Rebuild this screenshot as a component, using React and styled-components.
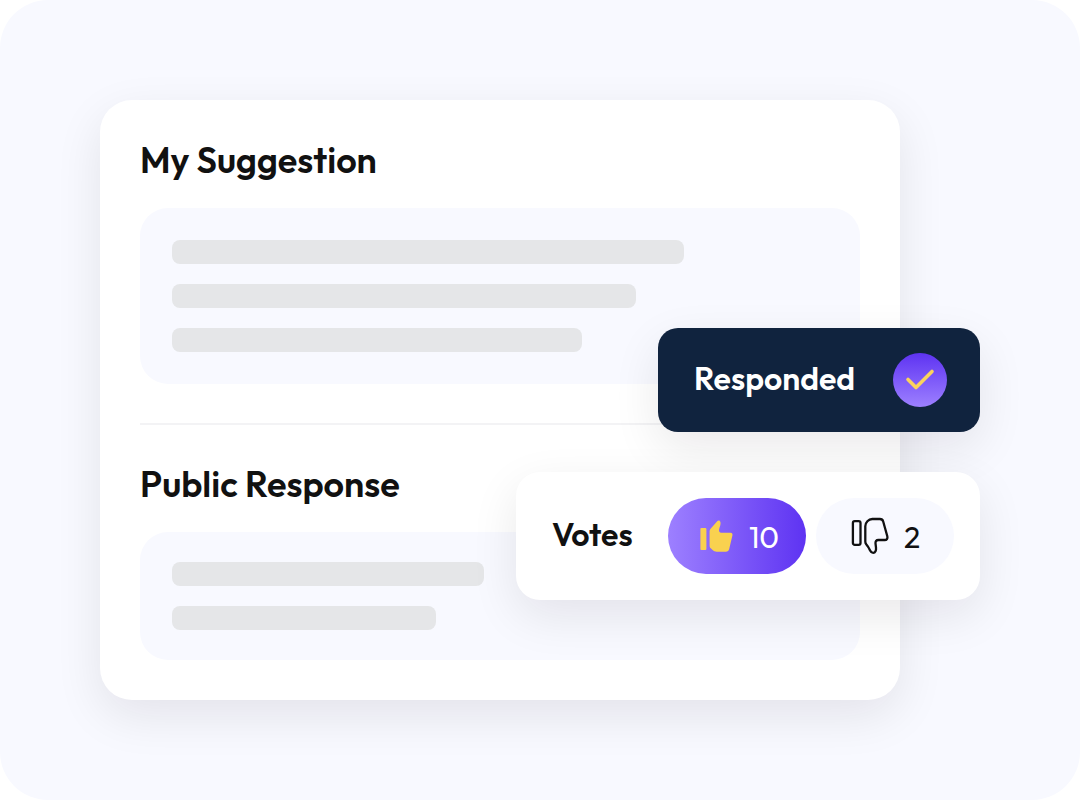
import React from "react";
import styled, { createGlobalStyle } from "styled-components";

const GlobalStyle = createGlobalStyle`
  *, *::before, *::after { box-sizing: border-box; }
  body {
    margin: 0;
    background: #ffffff;
    color: #111111;
    font-family: Outfit, Lato, "Liberation Sans", sans-serif;
  }
`;

const Stage = styled.main`
  position: relative;
  min-height: 100vh;
  padding: 100px 180px 100px 100px;
  border-radius: 48px;
  background: #f8f9ff;
`;

const Card = styled.article`
  padding: 40px;
  border-radius: 32px;
  background: #ffffff;
  box-shadow: 0 16px 48px rgba(17, 8, 17, 0.09);
`;

const Title = styled.h2`
  margin: 0 0 28px;
  font-size: 36px;
  line-height: 40px;
  font-weight: 600;
`;

const Panel = styled.div`
  display: flex;
  flex-direction: column;
  gap: 20px;
  padding: ${(p) => (p.$compact ? "30px 32px" : "32px")};
  border-radius: 28px;
  background: #f8f9ff;
`;

const Bar = styled.div`
  width: ${(p) => p.$width}px;
  max-width: 100%;
  height: 24px;
  border-radius: 8px;
  background: #e5e6e8;
`;

const Divider = styled.hr`
  height: 2px;
  margin: 39px 0;
  border: 0;
  background: #f3f3f5;
`;

const Floating = styled.aside`
  position: absolute;
  top: 328px;
  right: 100px;
  display: flex;
  flex-direction: column;
  align-items: flex-end;
  gap: 40px;
`;

const FloatingCard = styled.div`
  display: flex;
  align-items: center;
  justify-content: space-between;
  box-shadow: 0 16px 48px rgba(17, 8, 17, 0.09);
`;

const StatusCard = styled(FloatingCard)`
  width: 322px;
  height: 104px;
  padding: 0 33px 0 36px;
  border-radius: 20px;
  background: #10233e;
  color: #ffffff;
`;

const VotesCard = styled(FloatingCard)`
  width: 464px;
  height: 128px;
  padding: 0 26px 0 36px;
  border-radius: 24px;
  background: #ffffff;
`;

const Label = styled.span`
  padding-bottom: 4px;
  font-size: 32px;
  line-height: 40px;
  font-weight: 600;
`;

const VoteGroup = styled.div`
  display: flex;
  gap: 10px;
`;

const VoteButton = styled.button`
  display: flex;
  align-items: center;
  justify-content: center;
  gap: 14px;
  width: 138px;
  height: 76px;
  padding: 0;
  border: 0;
  border-radius: 38px;
  background: ${(p) => (p.$active ? "linear-gradient(90deg, #9d80ff, #5e33f2)" : "#f8f9ff")};
  color: ${(p) => (p.$active ? "#ffffff" : "#111111")};
  font-family: inherit;
  font-size: 30px;
  line-height: 40px;
  cursor: pointer;
`;

const Count = styled.span`
  padding-top: 2px;
`;

function CheckBadge() {
  return (
    <svg width="54" height="54" viewBox="0 0 54 54" aria-hidden="true">
      <defs>
        <linearGradient id="badge" x1="0" y1="0" x2="0" y2="1">
          <stop offset="0" stopColor="#5e33f2" />
          <stop offset="1" stopColor="#9d80ff" />
        </linearGradient>
      </defs>
      <circle cx="27" cy="27" r="27" fill="url(#badge)" />
      <path d="M15 26.5L23 34.5L39 18.5" fill="none" stroke="#fbd35c" strokeWidth="3.6" strokeLinecap="round" strokeLinejoin="round" />
    </svg>
  );
}

function ThumbUp() {
  return (
    <svg width="40" height="40" viewBox="0 0 40 40" fill="#f9d14f" aria-hidden="true">
      <rect x="5.4" y="12" width="6" height="22" rx="1" />
      <path d="M14.6 16C14.6 14.6 14.9 13.7 15.8 12.6L22.2 5.2C23.3 3.9 24.7 4.2 25.3 5.8C25.7 7 25.6 8 25.3 9.3L24.1 12.9C23.7 14.9 24.4 16.7 26.3 16.7H35.5C37 16.7 37.8 17.9 37.4 19.4L34.2 33C33.7 34.9 32.6 35.7 30.9 35.7H21.7C20 35.7 18.8 35.2 17.6 34.1L15.7 32.2C14.9 31.4 14.6 30.5 14.6 29.4Z" />
    </svg>
  );
}

function ThumbDown() {
  return (
    <svg width="40" height="40" viewBox="0 0 40 40" fill="none" stroke="#111111" strokeWidth="2.3" strokeLinejoin="round" aria-hidden="true">
      <rect x="2.9" y="5.2" width="7.6" height="23.6" rx="1.8" />
      <path d="M15.3 10.2C15.3 6.4 18.5 3 22.3 3H29.9C31.6 3 32.7 3.8 33.2 5.5L37.3 20.3C37.9 22.5 36.8 24 34.7 24H28.4C26.1 24 25.3 25.5 25.5 27.3L26 31.6C26.3 34.3 25.3 36.8 23.2 36.8C21.8 36.8 20.8 36 20.1 34.5C18.9 31.8 17.8 30 16.2 28.2C15.5 27.4 15.3 26.6 15.3 25.5Z" />
    </svg>
  );
}

export default function App() {
  return (
    <>
      <GlobalStyle />
      <Stage>
        <Card>
          <Title>My Suggestion</Title>
          <Panel>
            <Bar $width={512} />
            <Bar $width={464} />
            <Bar $width={410} />
          </Panel>
          <Divider />
          <Title>Public Response</Title>
          <Panel $compact>
            <Bar $width={312} />
            <Bar $width={264} />
          </Panel>
        </Card>
        <Floating>
          <StatusCard>
            <Label>Responded</Label>
            <CheckBadge />
          </StatusCard>
          <VotesCard>
            <Label>Votes</Label>
            <VoteGroup>
              <VoteButton type="button" $active aria-pressed="true">
                <ThumbUp />
                <Count>10</Count>
              </VoteButton>
              <VoteButton type="button" aria-pressed="false">
                <ThumbDown />
                <Count>2</Count>
              </VoteButton>
            </VoteGroup>
          </VotesCard>
        </Floating>
      </Stage>
    </>
  );
}
